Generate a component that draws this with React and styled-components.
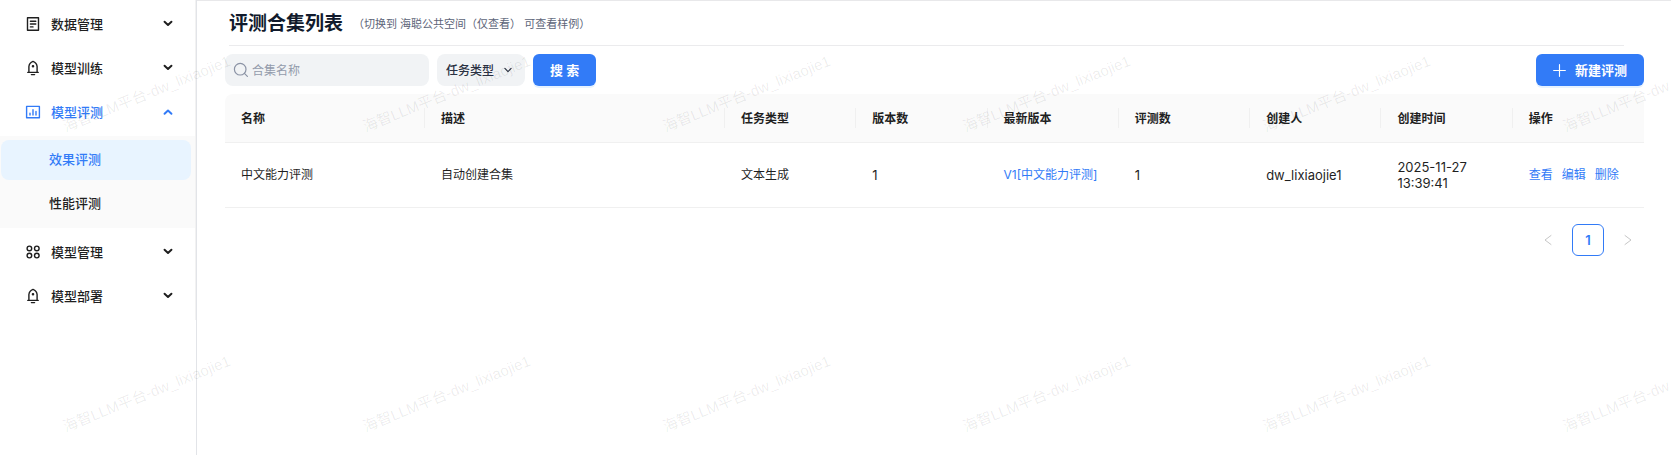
import React, { useState } from "react";
import styled, { createGlobalStyle } from "styled-components";

const GlobalStyle = createGlobalStyle`
  * {
    box-sizing: border-box;
  }

  body {
    margin: 0;
    background: #fff;
    color: #1f1f1f;
    font-family: Inter, "Noto Sans CJK SC", sans-serif;
    font-size: 12px;
    line-height: 16px;
  }

  button, input, select {
    font: inherit;
    color: inherit;
    border: 0;
    outline: 0;
    margin: 0;
  }

  a {
    color: #327bf7;
    text-decoration: none;
  }
`;

const Layout = styled.div`
  position: relative;
  display: flex;
  min-height: 100vh;
  overflow: hidden;
`;

const Sidebar = styled.aside`
  flex: none;
  width: 197px;
  border-right: 1px solid #e2e4e8;
`;

const Menu = styled.nav`
  display: flex;
  flex-direction: column;
  gap: 4px;
  padding: 4px 0;
  border-right: 1px solid #f2f2f2;
`;

const MenuItem = styled.button`
  display: flex;
  align-items: center;
  gap: 10px;
  height: 40px;
  padding: 0 21px 0 25px;
  background: none;
  color: ${(p) => (p.$active ? "#327bf7" : "#1f1f1f")};
  font-size: 13px;
  font-weight: 500;
  text-align: left;
  cursor: pointer;
`;

const MenuLabel = styled.span`
  flex: 1;
`;

const SubMenu = styled.div`
  display: flex;
  flex-direction: column;
  gap: 4px;
  padding: 4px 4px 4px 1px;
  background: #fafafa;
`;

const SubItem = styled.a`
  display: flex;
  align-items: center;
  height: 40px;
  padding: 0 0 2px 48px;
  border-radius: 8px;
  background: ${(p) => (p.$active ? "#e8f4ff" : "transparent")};
  color: ${(p) => (p.$active ? "#327bf7" : "#1f1f1f")};
  font-size: 13px;
  font-weight: 500;
`;

const Main = styled.main`
  flex: 1;
  min-width: 0;
  padding: 0 27px 0 28px;
  border-top: 1px solid #e8e8ea;
`;

const PageHeader = styled.header`
  display: flex;
  align-items: center;
  gap: 10px;
  height: 45px;
  margin: 0 20px 8px 4px;
  padding-top: 1px;
  border-bottom: 1px solid #ebebed;
`;

const Title = styled.h1`
  margin: 0;
  color: #111a2c;
  font-size: 19px;
  line-height: 28px;
  font-weight: 600;
`;

const Hint = styled.span`
  color: #5c6478;
  font-size: 11px;
`;

const Toolbar = styled.form`
  display: flex;
  align-items: center;
  gap: 8px;
  margin-bottom: 8px;
`;

const SearchBox = styled.label`
  display: flex;
  align-items: center;
  gap: 3px;
  width: 204px;
  height: 32px;
  padding: 0 8px;
  border-radius: 8px;
  background: #f1f3f5;
  color: #8b93a5;
`;

const SearchInput = styled.input`
  flex: 1;
  min-width: 0;
  padding: 2px 0 0;
  background: none;
  color: #1f1f1f;

  &::placeholder {
    color: #939bab;
    opacity: 1;
  }
`;

const SelectBox = styled.label`
  display: grid;
  grid-template-columns: 1fr 22px;
  align-items: center;
  width: 88px;
  height: 32px;
  border-radius: 8px;
  background: #f1f3f5;
  color: #2a3142;

  svg {
    grid-area: 1 / 2;
    pointer-events: none;
  }
`;

const Select = styled.select`
  grid-area: 1 / 1 / 2 / 3;
  height: 32px;
  padding: 2px 24px 0 9px;
  appearance: none;
  background: none;
  font-weight: 500;
`;

const Button = styled.button`
  display: flex;
  align-items: center;
  gap: 9px;
  height: 32px;
  padding: 0 17px;
  margin-left: ${(p) => (p.$end ? "auto" : 0)};
  border-radius: 6px;
  background: #327bf7;
  box-shadow: 0 2px 0 #e6f2ff;
  color: #fff;
  font-size: 13px;
  font-weight: 600;
  white-space: pre;
  cursor: pointer;
`;

const Table = styled.table`
  width: 100%;
  table-layout: fixed;
  border-collapse: separate;
  border-spacing: 0;
`;

const Th = styled.th`
  width: ${(p) => (p.$width ? `${p.$width}px` : "auto")};
  height: 49px;
  padding: 0;
  background: #fafafa;
  border-bottom: 1px solid #f0f0f0;
  font-weight: 600;
  text-align: left;

  &:first-child {
    border-top-left-radius: 8px;
  }

  &:last-child {
    border-top-right-radius: 8px;
  }
`;

const ThInner = styled.div`
  height: 20px;
  padding-left: 16px;
  border-right: 1px solid #f0f0f0;
  line-height: 22px;

  ${Th}:last-child & {
    border-right: 0;
  }
`;

const Td = styled.td`
  height: 65px;
  padding: 16px;
  border-bottom: 1px solid #f0f0f0;
  font-size: ${(p) => (p.$latin ? "13px" : "12px")};
`;

const Actions = styled.div`
  display: flex;
  gap: 9px;
`;

const Pagination = styled.nav`
  display: flex;
  justify-content: flex-end;
  gap: 8px;
  margin-top: 16px;
`;

const PageButton = styled.button`
  display: flex;
  align-items: center;
  justify-content: center;
  width: 32px;
  height: 32px;
  padding: 0;
  border: ${(p) => (p.$active ? "1px solid #327bf7" : "0")};
  border-radius: 6px;
  background: none;
  color: ${(p) => (p.$active ? "#327bf7" : "#bfbfbf")};
  font-size: 13px;
  font-weight: 600;
`;

const Watermark = styled.div`
  position: absolute;
  inset: 0;
  z-index: 10;
  display: grid;
  grid-template-columns: repeat(6, 300px);
  grid-auto-rows: 300px;
  overflow: hidden;
  pointer-events: none;
`;

const Mark = styled.span`
  padding: 84px 0 0 57px;
  color: rgba(0, 0, 0, 0.08);
  font-family: "Liberation Sans", "Noto Sans CJK SC", sans-serif;
  font-size: 15px;
  line-height: 20px;
  white-space: nowrap;

  span {
    display: inline-block;
    transform: rotate(-22deg);
  }
`;

const Icon = ({ size = 16, width = 1.2, children }) => (
  <svg
    width={size}
    height={size}
    viewBox="0 0 16 16"
    fill="none"
    stroke="currentColor"
    strokeWidth={width}
    strokeLinecap="round"
    strokeLinejoin="round"
    aria-hidden="true"
  >
    {children}
  </svg>
);

const DocIcon = () => (
  <Icon width={1.4}>
    <path d="M2.5 1.7h11v12.6h-11zM5.4 5.2h5.4M5.4 8h5.4M5.4 10.9h2.6" />
  </Icon>
);

const BellIcon = () => (
  <Icon width={1.4}>
    <path d="M3.9 12.2V6.5Q4.3 2.8 8 1.4q3.7 1.4 4.1 5.1v5.7M2.8 12.4h10.4M6.4 14.6h3.2" />
    <circle cx="8" cy="6.2" r="0.6" fill="currentColor" />
  </Icon>
);

const ChartIcon = () => (
  <Icon width={1.4}>
    <path d="M1.6 2.4h12.8v11.4H1.6zM5 9.2v1.8M8 5.8V11M11 7.4V11" />
  </Icon>
);

const GridIcon = () => (
  <Icon width={1.4}>
    <circle cx="4.4" cy="4.4" r="2.3" />
    <circle cx="11.8" cy="4.4" r="2.3" />
    <circle cx="4.4" cy="11.6" r="2.3" />
    <circle cx="11.8" cy="11.6" r="2.3" />
  </Icon>
);

const Chevron = ({ up }) => (
  <Icon size={12} width={2.6}>
    <path d={up ? "M3.4 10.4L8 6l4.6 4.4" : "M3.4 5L8 9.4 12.6 5"} />
  </Icon>
);

const menu = [
  { label: "数据管理", icon: DocIcon },
  { label: "模型训练", icon: BellIcon },
  { label: "模型评测", icon: ChartIcon, children: ["效果评测", "性能评测"] },
  { label: "模型管理", icon: GridIcon },
  { label: "模型部署", icon: BellIcon },
];

const columns = [
  { title: "名称", width: 200 },
  { title: "描述", width: 300 },
  { title: "任务类型" },
  { title: "版本数" },
  { title: "最新版本" },
  { title: "评测数" },
  { title: "创建人" },
  { title: "创建时间" },
  { title: "操作" },
];

const rows = [
  {
    name: "中文能力评测",
    desc: "自动创建合集",
    type: "文本生成",
    versions: 1,
    latest: "V1[中文能力评测]",
    count: 1,
    creator: "dw_lixiaojie1",
    created: "2025-11-27 13:39:41",
  },
];

const SideMenu = () => (
  <Sidebar>
    <Menu>
      {menu.map(({ label, icon: ItemIcon, children }) => (
        <React.Fragment key={label}>
          <MenuItem type="button" $active={!!children} aria-expanded={!!children}>
            <ItemIcon />
            <MenuLabel>{label}</MenuLabel>
            <Chevron up={!!children} />
          </MenuItem>
          {children && (
            <SubMenu>
              {children.map((child, i) => (
                <SubItem key={child} href="#" $active={i === 0}>
                  {child}
                </SubItem>
              ))}
            </SubMenu>
          )}
        </React.Fragment>
      ))}
    </Menu>
  </Sidebar>
);

const App = () => {
  const [keyword, setKeyword] = useState("");

  return (
    <Layout>
      <GlobalStyle />
      <SideMenu />
      <Main>
        <PageHeader>
          <Title>评测合集列表</Title>
          <Hint>（切换到 海聪公共空间（仅查看） 可查看样例）</Hint>
        </PageHeader>

        <Toolbar onSubmit={(e) => e.preventDefault()}>
          <SearchBox>
            <Icon>
              <circle cx="7.2" cy="7.2" r="5.8" />
              <path d="M11.4 11.4l3 3" />
            </Icon>
            <SearchInput
              value={keyword}
              onChange={(e) => setKeyword(e.target.value)}
              placeholder="合集名称"
              aria-label="合集名称"
            />
          </SearchBox>
          <SelectBox>
            <Select aria-label="任务类型">
              <option>任务类型</option>
              <option>文本生成</option>
            </Select>
            <Icon size={10} width={1.8}>
              <path d="M3 5.5L8 10.5l5-5" />
            </Icon>
          </SelectBox>
          <Button type="submit">搜 索</Button>
          <Button type="button" $end>
            <Icon size={13} width={1.4}>
              <path d="M8 .8v14.4M.8 8h14.4" />
            </Icon>
            新建评测
          </Button>
        </Toolbar>

        <Table>
          <thead>
            <tr>
              {columns.map((col) => (
                <Th key={col.title} $width={col.width}>
                  <ThInner>{col.title}</ThInner>
                </Th>
              ))}
            </tr>
          </thead>
          <tbody>
            {rows.map((row) => (
              <tr key={row.name}>
                <Td>{row.name}</Td>
                <Td>{row.desc}</Td>
                <Td>{row.type}</Td>
                <Td $latin>{row.versions}</Td>
                <Td>
                  <a href="#">{row.latest}</a>
                </Td>
                <Td $latin>{row.count}</Td>
                <Td $latin>{row.creator}</Td>
                <Td $latin>{row.created}</Td>
                <Td>
                  <Actions>
                    <a href="#">查看</a>
                    <a href="#">编辑</a>
                    <a href="#">删除</a>
                  </Actions>
                </Td>
              </tr>
            ))}
          </tbody>
        </Table>

        <Pagination>
          <PageButton type="button" aria-label="上一页">
            <Icon size={12}>
              <path d="M12 2L4 8l8 6" />
            </Icon>
          </PageButton>
          <PageButton type="button" $active>
            1
          </PageButton>
          <PageButton type="button" aria-label="下一页">
            <Icon size={12}>
              <path d="M4 2l8 6-8 6" />
            </Icon>
          </PageButton>
        </Pagination>
      </Main>

      <Watermark aria-hidden="true">
        {Array.from({ length: 12 }, (_, i) => (
          <Mark key={i}>
            <span>海智LLM平台-dw_lixiaojie1</span>
          </Mark>
        ))}
      </Watermark>
    </Layout>
  );
};

export default App;
